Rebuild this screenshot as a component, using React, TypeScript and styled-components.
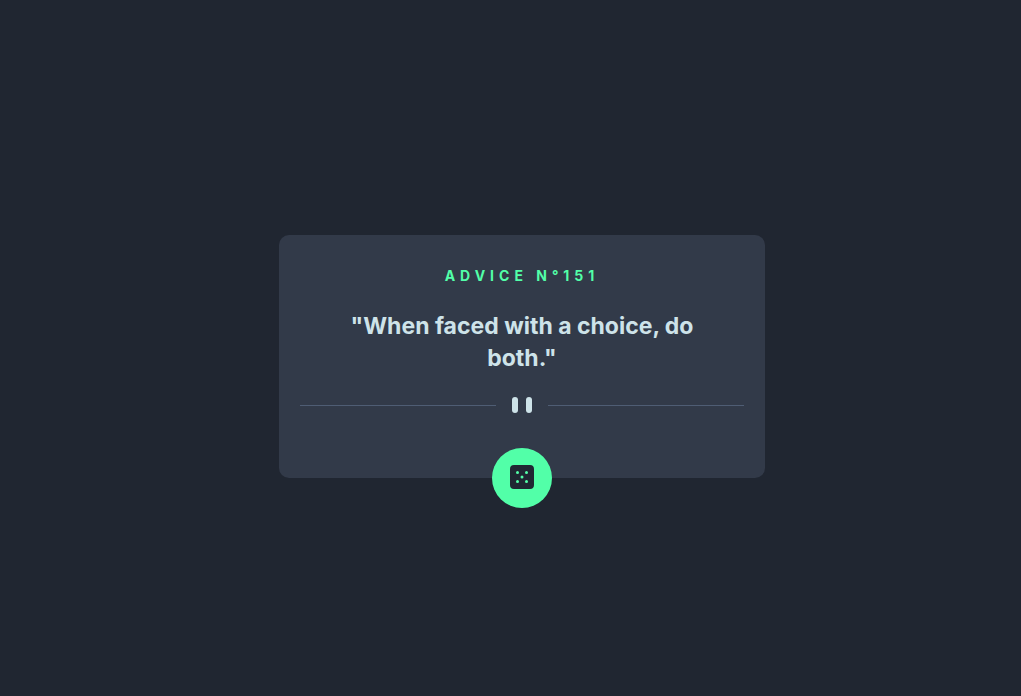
import React from "react";
import styled, { createGlobalStyle } from "styled-components";

const GlobalStyle = createGlobalStyle`
  *, *::before, *::after { box-sizing: border-box; }
  body {
    margin: 0;
    background: #202631;
    font-family: Inter, sans-serif;
  }
`;

const Page = styled.main`
  display: flex;
  align-items: center;
  justify-content: center;
  min-height: 100vh;
  padding: 49px 16px 32px 39px;
`;

const Card = styled.article`
  display: flex;
  flex-direction: column;
  align-items: center;
  width: 100%;
  max-width: 486px;
  padding: 30px 21px 0;
  border-radius: 10px;
  background: #323a49;
  text-align: center;
`;

const Label = styled.h1`
  margin: 0;
  color: #52ffa8;
  font-size: 14px;
  font-weight: 700;
  line-height: 22px;
  letter-spacing: 5px;
`;

const Quote = styled.p`
  margin: 23px 0 0;
  max-width: 370px;
  color: #cee3e9;
  font-size: 23px;
  font-weight: 700;
  line-height: 32px;
`;

const Divider = styled.svg`
  display: block;
  width: 100%;
  height: 16px;
  margin-top: 23px;
`;

const DiceButton = styled.button`
  display: grid;
  place-items: center;
  width: 60px;
  height: 60px;
  margin: 35px 0 -30px;
  padding: 0 0 2px;
  border: 0;
  border-radius: 50%;
  background: #52ffa8;
  cursor: pointer;
`;

export default function App() {
  return (
    <Page>
      <GlobalStyle />
      <Card>
        <Label>ADVICE N°151</Label>
        <Quote>"When faced with a choice, do both."</Quote>
        <Divider viewBox="0 0 444 16" aria-hidden="true">
          <path fill="#4f5d74" d="M0 8h196v1H0zM248 8h196v1H248z" />
          <rect x="212" width="6" height="16" rx="3" fill="#cee3e9" />
          <rect x="226" width="6" height="16" rx="3" fill="#cee3e9" />
        </Divider>
        <DiceButton type="button" aria-label="New advice">
          <svg width="24" height="24" viewBox="0 0 24 24" aria-hidden="true">
            <path
              fill="#202733"
              d="M20 0H4a4.005 4.005 0 0 0-4 4v16a4.005 4.005 0 0 0 4 4h16a4.005 4.005 0 0 0 4-4V4a4.005 4.005 0 0 0-4-4ZM7.5 18a1.5 1.5 0 1 1 0-3 1.5 1.5 0 0 1 0 3Zm0-9a1.5 1.5 0 1 1 0-3 1.5 1.5 0 0 1 0 3Zm4.5 4.5a1.5 1.5 0 1 1 0-3 1.5 1.5 0 0 1 0 3Zm4.5 4.5a1.5 1.5 0 1 1 0-3 1.5 1.5 0 0 1 0 3Zm0-9a1.5 1.5 0 1 1 0-3 1.5 1.5 0 0 1 0 3Z"
            />
          </svg>
        </DiceButton>
      </Card>
    </Page>
  );
}
